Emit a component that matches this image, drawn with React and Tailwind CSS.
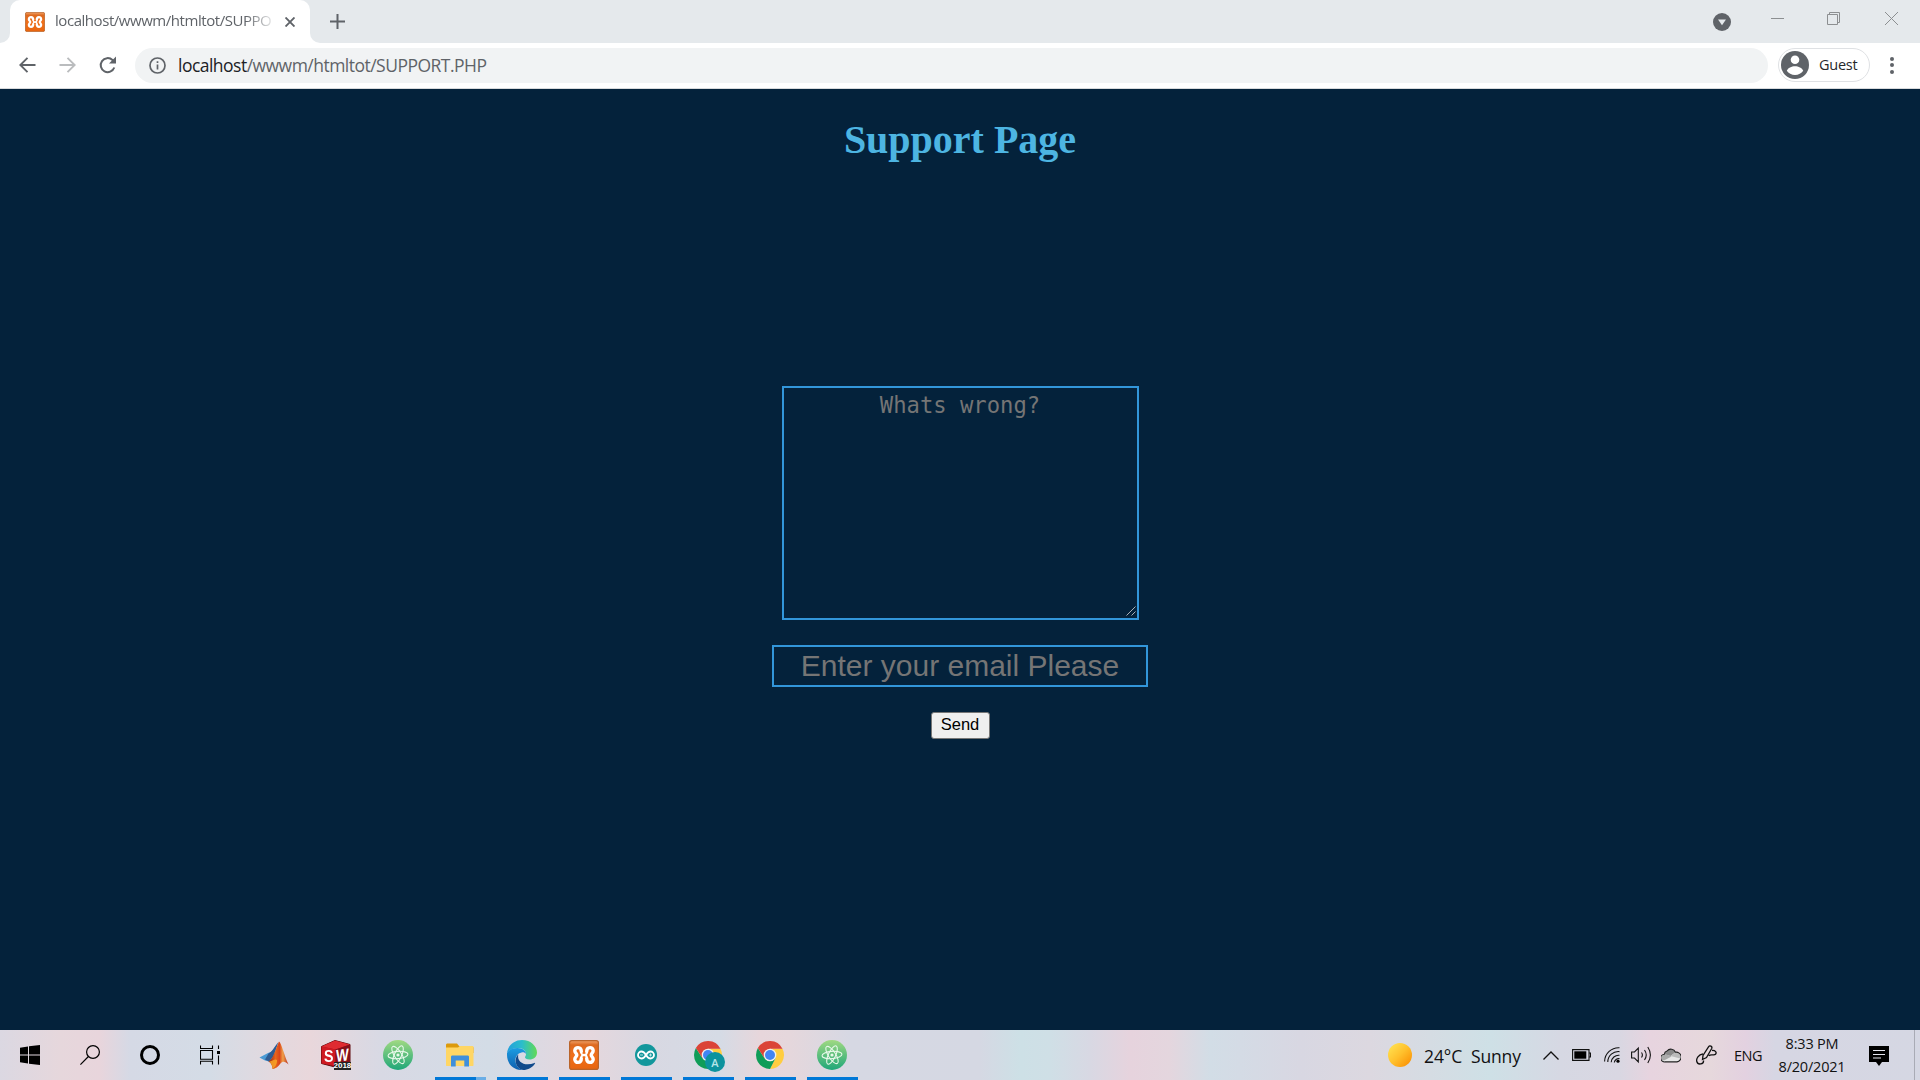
import React from 'react';

const UI = "font-['Open_Sans','Noto_Sans',sans-serif]";

function Xampp({ size }) {
  return (
    <svg width={size} height={size} viewBox="0 0 30 30">
      <defs>
        <linearGradient id="xg" x1="0" y1="0" x2="0" y2="1">
          <stop offset="0" stopColor="#f2a268" />
          <stop offset="0.15" stopColor="#dd6a20" />
          <stop offset="0.5" stopColor="#f0701a" />
          <stop offset="1" stopColor="#e8650f" />
        </linearGradient>
      </defs>
      <rect x="0.6" y="0.6" width="28.8" height="28.8" rx="2.2" fill="url(#xg)" stroke="#b9642a" strokeWidth="1.2" />
      <path
        d="M12.300 11.500C12.300 6.300 5.800 6.500 5.800 10.800C5.800 13 7.800 13.200 7.800 15C7.800 16.800 5.800 17 5.800 19.200C5.800 23.500 12.300 23.700 12.300 18.500M17.700 11.500C17.700 6.300 24.200 6.500 24.200 10.800C24.200 13 22.200 13.200 22.200 15C22.200 16.800 24.200 17 24.200 19.200C24.200 23.500 17.700 23.700 17.700 18.500"
        fill="none"
        stroke="#fff"
        strokeWidth="3.400"
        strokeLinecap="round"
        strokeLinejoin="round"
      />
      <path d="M12 11.500C12 13.500 13 15 15 15S18 13.500 18 11.500M12 18.500C12 16.500 13 15 15 15S18 16.500 18 18.500" fill="none" stroke="#fff" strokeWidth="1.900" />
    </svg>
  );
}

function Atom() {
  return (
    <svg width="30" height="30" viewBox="0 0 30 30">
      <defs>
        <linearGradient id="ag" x1="0" y1="0" x2="0" y2="1">
          <stop offset="0" stopColor="#a0d982" />
          <stop offset="1" stopColor="#1fa779" />
        </linearGradient>
      </defs>
      <circle cx="15" cy="15" r="15" fill="url(#ag)" />
      <g fill="none" stroke="#e8f8ea" strokeWidth="1.100">
        <ellipse cx="15" cy="15" rx="10" ry="3.600" transform="rotate(-5 15 15)" />
        <ellipse cx="15" cy="15" rx="10" ry="3.600" transform="rotate(57 15 15)" />
        <ellipse cx="15" cy="15" rx="10" ry="3.600" transform="rotate(115 15 15)" />
      </g>
      <circle cx="15" cy="15" r="1.600" fill="#e8f8ea" />
    </svg>
  );
}

function Chrome() {
  return (
    <svg width="28" height="28" viewBox="0 0 28 28">
      <path d="M14 7.700H26.500A14 14 0 0 1 14 28L19.500 17.200Z" fill="#ffcd40" />
      <path d="M1.880 7L8.500 17.200L14 20.300L19.500 17.200L14 28A14 14 0 0 1 1.880 7Z" fill="#0f9d58" />
      <path d="M1.880 7A14 14 0 0 1 26.500 7.700H14L8.500 17.200Z" fill="#db4437" />
      <circle cx="14" cy="14" r="6.300" fill="#f1f1f1" />
      <circle cx="14" cy="14" r="5" fill="#4285f4" />
    </svg>
  );
}

function WindowsLogo() {
  return (
    <svg width="20" height="20" viewBox="0 0 20 20">
      <path d="M0 2.700L8 1.500V9.500H0ZM9 1.300L20 0V9.500H9ZM0 10.500H8V18.500L0 17.300ZM9 10.500H20V20L9 18.700Z" fill="#000" />
    </svg>
  );
}

function SearchGlyph() {
  return (
    <svg width="20" height="20" viewBox="0 0 20 20" fill="none" stroke="#000" strokeWidth="1.200">
      <circle cx="13" cy="7" r="6.400" />
      <path d="M8.400 11.500L0.400 19.600" />
    </svg>
  );
}

function TaskView() {
  return (
    <svg width="20" height="20" viewBox="0 0 20 20" fill="none" stroke="#000" strokeWidth="1.100">
      <path d="M0.500 0.500V3.500H12.500V0.500M0.500 5.500H12.500V14.300H0.500ZM0.500 19.500V16.300H12.500V19.500M18.500 0.500V4M18.500 10.500V19.500" />
      <rect x="17" y="6" width="3" height="3" fill="#000" stroke="none" />
    </svg>
  );
}

function Matlab() {
  return (
    <svg width="30" height="28" viewBox="0 0 30 28">
      <defs>
        <linearGradient id="mg" x1="0" y1="0" x2="1" y2="0">
          <stop offset="0" stopColor="#8c2116" />
          <stop offset="0.350" stopColor="#e7641c" />
          <stop offset="0.550" stopColor="#d9461a" />
          <stop offset="0.720" stopColor="#f0a04a" />
          <stop offset="1" stopColor="#b5281b" />
        </linearGradient>
      </defs>
      <path d="M0.500 16.500L9 12L13 10.500L18 3L16 13L10 20.500L6 19.500Z" fill="#4a9ad4" />
      <path d="M9.500 12.500C13 11 15.500 5.500 19.500 1L14 16L10 20.500L6 18.500Z" fill="#2f5c93" />
      <path d="M20 0.500C22.500 2 25.500 15.500 29.500 23.500C26 20 23.500 20 21.500 22.500C19 26 16.500 27.500 13.500 28C13.500 25 12 21.500 9.500 20.500C14 18.500 17 7 20 0.500Z" fill="url(#mg)" />
      <path d="M13.500 28C13.500 24.500 12 22 10 20.500C13 20.500 16 17 18 19C18.500 22 16 27 13.500 28Z" fill="#f8a324" opacity="0.850" />
    </svg>
  );
}

function SolidWorks() {
  return (
    <div className="relative h-[30px] w-[31px] font-['Liberation_Sans',sans-serif] font-bold text-white">
      <svg width="31" height="30" viewBox="0 0 31 30">
        <path d="M0.500 6.500L14 0.500L29 4.500V23L14 27L0.500 23.500Z" fill="#a30f18" stroke="#5f0a0e" />
        <path d="M0.500 6.500L14 0.500L29 4.500L14.500 9.500Z" fill="#df2b31" />
        <path d="M0.500 6.500L14.500 9.500V26L0.500 23.500Z" fill="#cf1a22" />
        <path d="M14.500 9.500L29 4.500V23L14.500 27Z" fill="#85101a" />
      </svg>
      <span className="absolute left-[3px] top-[7px] origin-top-left scale-x-[0.95] scale-y-[1.15] text-[15px] leading-[15px]">S</span>
      <span className="absolute left-[15px] top-[7px] origin-top-left -skew-y-6 scale-x-[0.9] scale-y-[1.15] text-[15px] leading-[15px]">W</span>
      <span className="absolute left-[13px] top-[22px] bg-[#222] text-[8px] leading-[8px]">2018</span>
    </div>
  );
}

function Folder() {
  return (
    <svg width="28" height="24" viewBox="0 0 28 24">
      <path d="M0 2C0 1 0.700 0.500 1.500 0.500H11L13.500 3.500H26C27 3.500 27.500 4 27.500 5V10H0Z" fill="#dc9a0c" />
      <path d="M0 4.500H12L14 3H26.500C27.200 3 27.500 3.500 27.500 4.200V22C27.500 22.700 27.200 23 26.500 23H1C0.300 23 0 22.700 0 22Z" fill="#ffd664" />
      <path d="M5 23.500V14C5 13 5.500 12.500 6.500 12.500H21.500C22.500 12.500 23 13 23 14V23.500H18.300V17.500H9.700V23.500Z" fill="#3f8fdb" />
    </svg>
  );
}

function Edge() {
  return (
    <svg width="30" height="30" viewBox="0 0 30 30">
      <defs>
        <linearGradient id="e1" x1="0" y1="0.300" x2="1" y2="0.300">
          <stop offset="0" stopColor="#249fdc" />
          <stop offset="0.500" stopColor="#2bbdcb" />
          <stop offset="1" stopColor="#62da54" />
        </linearGradient>
        <linearGradient id="e2" x1="0" y1="0" x2="0" y2="1">
          <stop offset="0" stopColor="#1b9de2" />
          <stop offset="1" stopColor="#0f5fae" />
        </linearGradient>
      </defs>
      <path d="M0 13C1 5 7.500 0 15 0C24 0 30 6.500 30 12.500C30 17 26.500 19.500 22.500 19.500C19.500 19.500 18 18.300 18 17.300C18 16.500 19 16 19 14C19 11 16 8 11.500 8C6 8 2 10 0 13Z" fill="url(#e1)" />
      <path d="M0 13C2 9.500 6 8 10.500 8C15.500 8 19 11 19 14C18 12.500 16.500 12 14.500 12.500C10 13.500 8 17.500 8.500 21.500C9 26 12 29 16 30C7 30.600 0 24 0 15Z" fill="url(#e2)" />
      <path d="M11.300 14.500C7 18 7.500 28 16 30C21 30 25.500 27.500 28 23.500C28.300 23 28 22.600 27.500 22.900C19 26.500 9.500 23 11.300 14.500Z" fill="#114a8b" />
    </svg>
  );
}

function Arduino() {
  return (
    <svg width="22" height="22" viewBox="0 0 22 22">
      <circle cx="11" cy="11" r="11" fill="#12979c" />
      <path d="M11 11C9.500 8.500 8.300 7.500 6.500 7.500A3.500 3.500 0 0 0 6.500 14.500C8.300 14.500 9.500 13.500 11 11C12.500 8.500 13.700 7.500 15.500 7.500A3.500 3.500 0 0 1 15.500 14.500C13.700 14.500 12.500 13.500 11 11Z" fill="none" stroke="#fff" strokeWidth="1.800" />
      <path d="M5 11H8M14 11H17M15.500 9.500V12.500" stroke="#d5f2f2" strokeWidth="0.800" />
    </svg>
  );
}

function ChromeProfile() {
  return (
    <div className="relative h-7 w-7">
      <Chrome />
      <span className="absolute left-[11px] top-[11px] flex size-5 items-center justify-center rounded-full bg-[#0c939e] font-['Open_Sans',sans-serif] text-[11px] font-semibold leading-none text-[#b5e6e8]">
        A
      </span>
    </div>
  );
}

function TaskItem({ children, w = 'w-[62px]', bar }) {
  return (
    <div className={`relative flex h-full shrink-0 items-center justify-center ${w}`}>
      {children}
      {bar && (
        <span className="absolute bottom-0 left-[6px] flex h-[3px] w-[51px] bg-[#0078d7]">
          {bar === 'multi' && <span className="ml-auto h-full w-[10px] bg-[#6aaee6]" />}
        </span>
      )}
    </div>
  );
}

function TabStrip() {
  return (
    <div className="flex h-[43px] shrink-0 bg-[#e5e9ec] text-[#5f6368]">
      <div className="flex w-[10px] items-end bg-white">
        <div className="h-full w-full rounded-br-[10px] bg-[#e5e9ec]" />
      </div>
      <div className="flex w-[300px] bg-[#e5e9ec]">
        <div className="flex w-full items-center rounded-t-[10px] bg-white pl-[15px]">
          <Xampp size={20} />
          <span className={`${UI} -mt-[2px] ml-[10px] w-[218px] overflow-hidden whitespace-nowrap text-[15px] tracking-[-0.450px] [mask-image:linear-gradient(to_right,#000_190px,transparent_222px)]`}>
            localhost/wwwm/htmltot/SUPPO
          </span>
          <svg className="ml-[12px]" width="10" height="10" viewBox="0 0 10 10" stroke="#5f6368" strokeWidth="1.900">
            <path d="M0.500 0.500L9.500 9.500M9.500 0.500L0.500 9.500" />
          </svg>
        </div>
      </div>
      <div className="w-[10px] bg-white">
        <div className="h-full w-full rounded-bl-[10px] bg-[#e5e9ec]" />
      </div>
      <svg className="ml-[10px] mt-[14px]" width="15" height="15" viewBox="0 0 15 15" stroke="#5f6368" strokeWidth="2">
        <path d="M7.500 0V15M0 7.500H15" />
      </svg>
      <svg className="ml-auto mt-[13px]" width="18" height="18" viewBox="0 0 18 18">
        <circle cx="9" cy="9" r="9" fill="#5f6368" />
        <path d="M5 6.500H13L9 12.200Z" fill="#e5e9ec" />
      </svg>
      <svg className="ml-[40px] mt-[18px]" width="13" height="1" viewBox="0 0 13 1">
        <path d="M0 0.500H13" stroke="#8c8f91" />
      </svg>
      <svg className="ml-[43px] mt-[12px]" width="13" height="13" viewBox="0 0 13 13" fill="none" stroke="#8c8f91">
        <path d="M0.500 2.500H10.500V12.500H0.500ZM2.500 2.500V0.500H12.500V10.500H10.500" />
      </svg>
      <svg className="ml-[45px] mr-[22px] mt-[12px]" width="13" height="13" viewBox="0 0 13 13" stroke="#8c8f91">
        <path d="M0 0L13 13M13 0L0 13" />
      </svg>
    </div>
  );
}

function Toolbar() {
  return (
    <div className="flex h-[46px] shrink-0 items-start border-b border-[#d8dadc] bg-white pt-[5px]">
      <div className="flex h-[34px] items-center">
        <svg className="ml-[19px]" width="17" height="16" viewBox="0 0 17 16" fill="none" stroke="#5f6368" strokeWidth="1.900">
          <path d="M16.500 8H1.500M8.500 0.800L1.300 8L8.500 15.200" />
        </svg>
        <svg className="ml-[23px]" width="17" height="16" viewBox="0 0 17 16" fill="none" stroke="#babcbe" strokeWidth="1.900">
          <path d="M0.500 8H15.500M8.500 0.800L15.700 8L8.500 15.200" />
        </svg>
        <svg className="ml-[23px]" width="18" height="18" viewBox="0 0 18 18" fill="none" stroke="#5f6368" strokeWidth="2">
          <path d="M15.300 11.500A7 7 0 1 1 13.500 4L15.500 5.500" />
          <path d="M17 0.500V7.500H10Z" fill="#5f6368" stroke="none" />
        </svg>
      </div>
      <div className="ml-[18px] flex h-[35px] w-[1633px] items-center rounded-full bg-[#f1f3f4]">
        <svg className="ml-[14px]" width="17" height="17" viewBox="0 0 17 17" fill="none" stroke="#5f6368" strokeWidth="1.700">
          <circle cx="8.500" cy="8.500" r="7.500" />
          <path d="M8.500 7.500V12.500M8.500 4.300V6" />
        </svg>
        <span className={`${UI} -mt-[2px] ml-[12px] whitespace-nowrap text-[17.500px] leading-[24px] tracking-[-0.520px] text-[#5f6368]`}>
          <span className="text-[#202124]">localhost</span>/wwwm/htmltot/SUPPORT.PHP
        </span>
      </div>
      <div className="ml-[10px] flex h-[34px] w-[92px] items-center rounded-full border border-[#dfe1e4] pl-[2px]">
        <svg width="28" height="28" viewBox="0 0 28 28">
          <circle cx="14" cy="14" r="14" fill="#5f6368" />
          <circle cx="14" cy="8.800" r="4.300" fill="#fff" />
          <path d="M5.800 19.800C7 16.700 10.500 15.200 14 15.200S21 16.700 22.200 19.800C20.500 22.500 17.500 24 14 24S7.500 22.500 5.800 19.800Z" fill="#fff" />
        </svg>
        <span className={`${UI} ml-[10px] text-[14.500px] leading-[20px] tracking-[-0.250px] text-[#26282b]`}>Guest</span>
      </div>
      <div className="ml-[20px] flex h-[34px] flex-col items-center justify-center gap-[2.500px]">
        <span className="size-1 rounded-full bg-[#5f6368]" />
        <span className="size-1 rounded-full bg-[#5f6368]" />
        <span className="size-1 rounded-full bg-[#5f6368]" />
      </div>
    </div>
  );
}

function Page() {
  return (
    <main className="flex flex-1 flex-col items-center bg-[#04223b]">
      <h1 className="mt-[28px] h-[46px] whitespace-nowrap font-['Liberation_Serif',serif] text-[40px] font-bold leading-[46px] text-[#4db5e2]">
        Support Page
      </h1>
      <div className="relative mt-[223px]">
        <textarea
          placeholder="Whats wrong?"
          className="block h-[234px] w-[357px] resize-none border-2 border-[#3296da] bg-transparent px-[3px] pt-[3px] text-center font-['DejaVu_Sans_Mono',monospace] text-[22.200px] leading-[28px] outline-none placeholder:text-[#757575]"
        />
        <svg className="absolute bottom-[4px] right-[3px]" width="10" height="10" viewBox="0 0 10 10" stroke="#a9b0b6">
          <path d="M0.500 9.500L9.500 0.500M5.500 9.500L9.500 5.500" />
        </svg>
      </div>
      <input
        placeholder="Enter your email Please"
        className="mt-[25px] h-[42px] w-[376px] border-2 border-[#3296da] bg-transparent pb-[2px] text-center font-['Liberation_Sans',sans-serif] text-[30px] outline-none placeholder:text-[#757575]"
      />
      <button className="mt-[25px] h-[27px] w-[59px] rounded-[3px] border border-[#767676] bg-[#efefef] pb-[3px] font-['Liberation_Sans',sans-serif] text-[16.500px] leading-[22px] text-black">
        Send
      </button>
    </main>
  );
}

function Taskbar() {
  return (
    <footer className="flex h-[50px] shrink-0 items-center bg-[linear-gradient(to_right,#dbd8e2_0px,#e6d7dc_60px,#e8d5dc_100px,#d5d9e5_130px,#d4dce6_210px,#e2d9df_270px,#e9d7db_310px,#d8d9e4_380px,#d3dce6_490px,#ddd9e2_540px,#e5d7dd_590px,#d8d8e2_650px,#d5dbe5_720px,#e7d6db_760px,#e5d7dc_790px,#d6d8e3_850px,#d5d8e3_980px,#cde0e6_1020px,#cfdfe6_1050px,#d8d8e3_1090px,#e6d3dd_1130px,#e4d6de_1170px,#d2dde6_1210px,#d4dbe5_1240px,#d8d7e2_1300px,#dcd8e0_1370px,#cee0e6_1490px,#d6d8e3_1560px,#d9d7e2_1620px,#e7d4df_1650px,#e6d8dc_1710px,#e3d1e0_1745px,#d6d6e3_1775px,#d5d7e3_1920px)]">
      <TaskItem w="w-[60px]"><WindowsLogo /></TaskItem>
      <TaskItem w="w-[60px]"><SearchGlyph /></TaskItem>
      <TaskItem w="w-[60px]"><span className="size-[20px] rounded-full border-3 border-black" /></TaskItem>
      <TaskItem w="w-[60px]"><TaskView /></TaskItem>
      <div className="w-[3px]" />
      <TaskItem><Matlab /></TaskItem>
      <TaskItem><SolidWorks /></TaskItem>
      <TaskItem><Atom /></TaskItem>
      <TaskItem bar="multi"><Folder /></TaskItem>
      <TaskItem bar="one"><Edge /></TaskItem>
      <TaskItem bar="one"><Xampp size={30} /></TaskItem>
      <TaskItem bar="one"><Arduino /></TaskItem>
      <TaskItem bar="one"><ChromeProfile /></TaskItem>
      <TaskItem bar="one"><Chrome /></TaskItem>
      <TaskItem bar="one"><Atom /></TaskItem>
      <div className={`${UI} ml-auto flex h-full items-center text-[#111]`}>
        <span className="size-6 rounded-full bg-[linear-gradient(135deg,#ffe04f_10%,#ffc02c_50%,#fb9306_90%)]" />
        <span className="ml-[12px] mt-[2px] w-[98px] whitespace-pre text-[17.500px] leading-[24px] tracking-[-0.120px]">24°C  Sunny</span>
        <svg className="ml-[21px]" width="16" height="9" viewBox="0 0 16 9" fill="none" stroke="#111" strokeWidth="1.300">
          <path d="M0.500 8.500L8 1L15.500 8.500" />
        </svg>
        <svg className="ml-[13px]" width="19" height="12" viewBox="0 0 19 12">
          <path d="M0.600 0.600H17V11.400H0.600ZM17 4H18.500V8H17" fill="none" stroke="#111" strokeWidth="1.100" />
          <rect x="2.300" y="2.300" width="12" height="7.400" fill="#000" />
        </svg>
        <svg className="ml-[13px]" width="17" height="16" viewBox="0 0 17 16" fill="none" stroke="#111" strokeWidth="1.100">
          <path d="M0.600 14.500A14 14 0 0 1 15.500 0.800M3.800 15A10.500 10.500 0 0 1 15.500 4.600M7.200 15.300A7.500 7.500 0 0 1 15.500 8.300M10.300 15.500A4.500 4.500 0 0 1 15.500 11.600" />
          <circle cx="14" cy="14.200" r="1.600" fill="#000" stroke="none" />
        </svg>
        <svg className="ml-[10px]" width="21" height="18" viewBox="0 0 21 18" fill="none" stroke="#111" strokeWidth="1.100">
          <path d="M0.600 6H3.500L7.300 2.200V15.800L3.500 12H0.600ZM10.500 6.500Q12.300 9 10.500 11.500M13.500 4Q17 9 13.500 14M16.800 1Q22 9 16.800 17" />
        </svg>
        <svg className="ml-[9px]" width="20" height="15" viewBox="0 0 20 15">
          <path d="M4 13.900A3.800 3.800 0 0 1 3.300 6.200A3.700 3.700 0 0 1 6 3A5 5 0 0 1 14.500 4.200A4.900 4.900 0 0 1 16 13.900Z" fill="#e8e8e8" />
          <path d="M3.300 6.200A3.700 3.700 0 0 1 6 3A5 5 0 0 1 14.500 4.200L9.500 8Z" fill="#8b8b8b" />
          <path d="M1 12C0 9 1.500 6.500 4 6L10.500 8.500L3 12.500Z" fill="#aaa" />
          <path d="M9.500 8L14.500 4.200C18 4.200 19.500 7 19.300 10.500Z" fill="#bbb" />
          <path d="M4 13.900A3.800 3.800 0 0 1 3.300 6.200A3.700 3.700 0 0 1 6 3A5 5 0 0 1 14.500 4.200A4.900 4.900 0 0 1 16 13.900Z" fill="none" stroke="#222" strokeWidth="1.100" />
        </svg>
        <svg className="ml-[15px]" width="21" height="20" viewBox="0 0 21 20" fill="none" stroke="#111" strokeWidth="1.300">
          <path d="M6.500 14.500L7 10.500L12.500 1.800C13.800 0 16.600 1.400 15.700 3.500L10.500 12.500ZM7 8.800C2.500 9.500 0 13.500 0.800 16.500C1.800 20.500 8 19.300 7.500 15.500M16 5.500C19.500 5.200 21 7.500 19.500 9.300C18 11 15 8.500 12.800 10.800" />
        </svg>
        <span className="ml-[17px] mt-[2px] w-[29px] text-[14.500px] leading-[20px] tracking-[-0.500px]">ENG</span>
        <div className="ml-[15px] flex w-[68px] flex-col items-center whitespace-nowrap text-[14.500px] leading-[23px] tracking-[-0.200px]">
          <span>8:33 PM</span>
          <span>8/20/2021</span>
        </div>
        <svg className="ml-[23px] mt-[1px]" width="20" height="20" viewBox="0 0 20 20">
          <path d="M0 0H20V16H13L10 20L7 16H0Z" fill="#000" />
          <path d="M4 4.500H16M4 8.500H16M4 12H12" stroke="#e5e5ee" strokeWidth="1" />
        </svg>
        <div className="ml-[25px] h-full w-[6px] border-l border-[#a9abb5]" />
      </div>
    </footer>
  );
}

export default function App() {
  return (
    <div className="flex h-[1080px] w-[1920px] flex-col overflow-hidden">
      <TabStrip />
      <Toolbar />
      <Page />
      <Taskbar />
    </div>
  );
}
